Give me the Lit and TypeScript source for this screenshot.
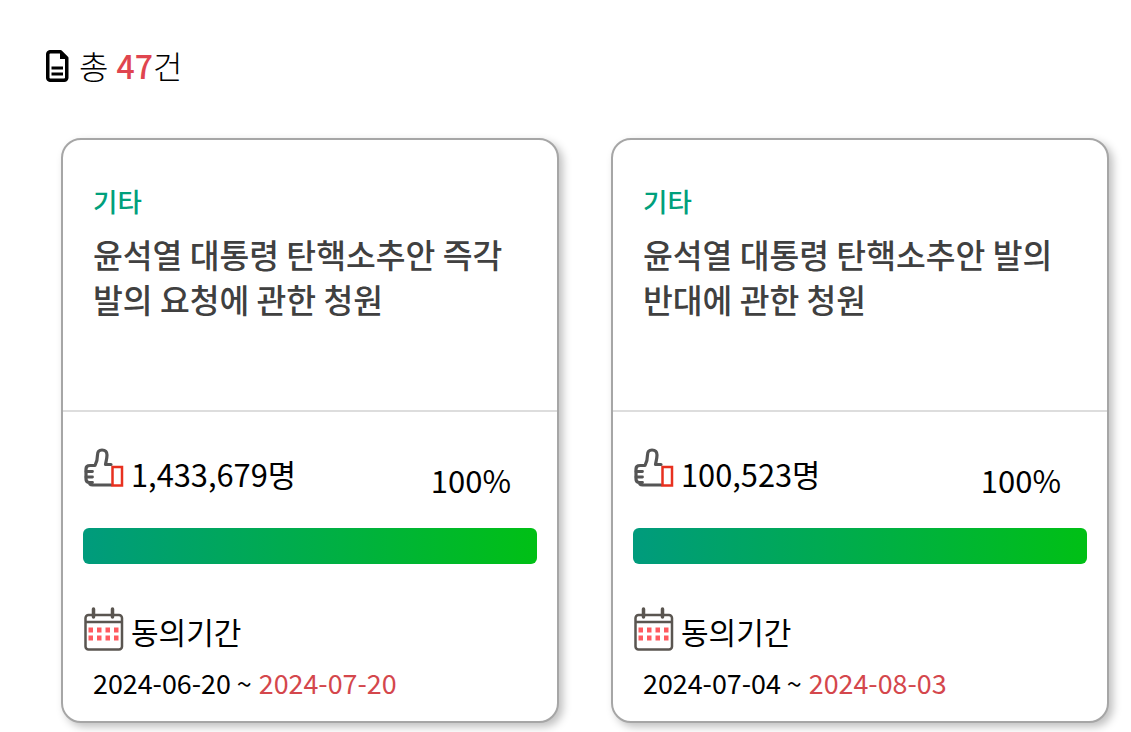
import {LitElement, html, css, svg} from 'lit';
import {customElement} from 'lit/decorators.js';

interface Petition {
  category: string;
  title: string;
  count: string;
  percent: string;
  start: string;
  end: string;
}

const PETITIONS: Petition[] = [
  {
    category: '기타',
    title: '윤석열 대통령 탄핵소추안 즉각 발의 요청에 관한 청원',
    count: '1,433,679명',
    percent: '100%',
    start: '2024-06-20',
    end: '2024-07-20',
  },
  {
    category: '기타',
    title: '윤석열 대통령 탄핵소추안 발의 반대에 관한 청원',
    count: '100,523명',
    percent: '100%',
    start: '2024-07-04',
    end: '2024-08-03',
  },
];

const DOTS = [0, 1].flatMap((row) =>
  [0, 1, 2, 3].map((col) => ({x: 5.5 + col * 8.5, y: 20.5 + row * 8}))
);

@customElement('app-root')
export class AppRoot extends LitElement {
  static override styles = css`
    :host {
      display: block;
      font-family: 'Noto Sans CJK KR', 'Noto Sans', sans-serif;
      color: #000;
      background: #fff;
      height: 732px;
      overflow: hidden;
      box-sizing: border-box;
      padding: 45px 0 0 46px;
    }
    .total {
      display: flex;
      align-items: center;
      gap: 10px;
      height: 42px;
      font-size: 32px;
      font-weight: 300;
    }
    .total span {
      padding-bottom: 2px;
    }
    .total b {
      margin-left: 1px;
      font-weight: 500;
      color: #e0454f;
    }
    .cards {
      display: grid;
      grid-template-columns: 498px 498px;
      gap: 52px;
      margin: 51px 0 0 15px;
    }
    .card {
      box-sizing: border-box;
      height: 585px;
      border: 2px solid #a6a6a6;
      border-radius: 20px;
      background: #fff;
      box-shadow: 4px 4px 8px rgba(0, 0, 0, 0.25);
    }
    .head {
      box-sizing: border-box;
      height: 272px;
      padding: 42px 30px 0;
      border-bottom: 2px solid #ddd;
    }
    .category {
      font-size: 26.5px;
      font-weight: 500;
      line-height: 38px;
      color: #00a07c;
    }
    .title {
      margin-top: 11px;
      font-size: 32.4px;
      font-weight: 500;
      line-height: 45px;
      color: #404040;
      word-break: keep-all;
    }
    .body {
      padding: 34px 20px 0;
    }
    .stats {
      display: flex;
      justify-content: space-between;
      height: 50px;
    }
    .count,
    .period {
      display: flex;
      align-items: center;
      gap: 5px;
      font-size: 30px;
      height: 48px;
    }
    .count {
      font-size: 30.8px;
    }
    .count span {
      padding-top: 6px;
    }
    .period span {
      padding-top: 4px;
    }
    .percent {
      font-size: 31px;
      margin: 13px 26px 0 0;
      line-height: 42px;
    }
    .bar {
      height: 36px;
      margin-top: 32px;
      border-radius: 6px;
      background: linear-gradient(90deg, #009b7d, #00c015);
    }
    .period {
      margin-top: 41px;
    }
    .dates {
      margin: 9px 0 0 10px;
      font-size: 26.85px;
      line-height: 42px;
    }
    .dates span {
      margin-left: 1px;
      color: #d4474c;
    }
    svg {
      flex: none;
      display: block;
    }
  `;

  private _docIcon() {
    return html`<svg width="23" height="32" viewBox="0 0 23 32" fill="none">
      <path
        d="M4 1.750H14.500L20.750 8V28A2.750 2.750 0 0 1 18 30.250H4A2.750 2.750 0 0 1 1.750 28V4A2.750 2.750 0 0 1 4 1.750Z"
        stroke="#000"
        stroke-width="3.500"
        stroke-linejoin="round"
      />
      <path d="M14 1.500V9H21.500Z" fill="#000" />
      <path d="M5.500 18H17M5.500 24H17" stroke="#000" stroke-width="3" />
    </svg>`;
  }

  private _thumbIcon() {
    return html`<svg width="43" height="44" viewBox="0 0 43 44" fill="none">
      <path
        d="M28 37H9.500C7.500 37 6.500 36 6.500 34.500C4 34.500 3 33 3 31V21C3 19 4 17.500 7 17.500H12C14 14 14.500 11 14.500 7C14.500 4 16 2 19 2C22.500 2 24 4 24 7C24 10.500 23 13.500 22.500 16.500H28"
        stroke="#555"
        stroke-width="3.200"
        stroke-linecap="round"
        stroke-linejoin="round"
      />
      <path
        d="M3 23.500H9.500M3 29H9.500M6.500 34.500H9.500"
        stroke="#555"
        stroke-width="2.800"
        stroke-linecap="round"
      />
      <rect x="29.500" y="19" width="9.500" height="18.500" stroke="#e8301f" stroke-width="2.500" />
    </svg>`;
  }

  private _calendarIcon() {
    return html`<svg width="43" height="44" viewBox="0 0 43 44" fill="none">
      <rect
        x="2.500"
        y="8"
        width="36.500"
        height="34.500"
        rx="3"
        stroke="#5a5550"
        stroke-width="2.500"
      />
      <path d="M2.500 15H39" stroke="#5a5550" stroke-width="2.500" />
      <path
        d="M10.500 2V10M29.500 2V10"
        stroke="#5a5550"
        stroke-width="3.500"
        stroke-linecap="round"
      />
      ${DOTS.map(
        (d) =>
          svg`<rect x=${d.x} y=${d.y} width="4.500" height="5" fill="#ff5a5f" />`
      )}
    </svg>`;
  }

  private _renderCard(p: Petition) {
    return html`<article class="card">
      <div class="head">
        <div class="category">${p.category}</div>
        <div class="title">${p.title}</div>
      </div>
      <div class="body">
        <div class="stats">
          <div class="count">${this._thumbIcon()}<span>${p.count}</span></div>
          <div class="percent">${p.percent}</div>
        </div>
        <div class="bar"></div>
        <div class="period">${this._calendarIcon()}<span>동의기간</span></div>
        <div class="dates">${p.start} ~ <span>${p.end}</span></div>
      </div>
    </article>`;
  }

  override render() {
    return html`
      <div class="total">${this._docIcon()}<span>총 <b>47</b>건</span></div>
      <div class="cards">${PETITIONS.map((p) => this._renderCard(p))}</div>
    `;
  }
}

declare global {
  interface HTMLElementTagNameMap {
    'app-root': AppRoot;
  }
}
